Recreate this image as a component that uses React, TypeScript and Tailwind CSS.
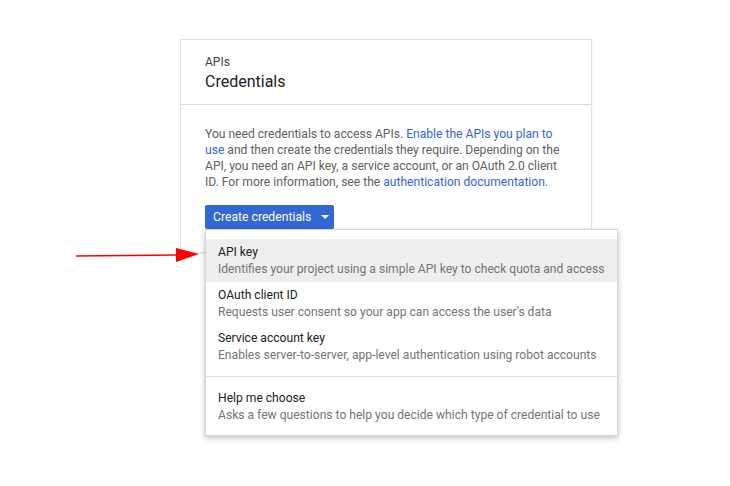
import React from 'react';

const menuItems = [
  { title: 'API key', desc: 'Identifies your project using a simple API key to check quota and access', active: true },
  { title: 'OAuth client ID', desc: "Requests user consent so your app can access the user's data" },
  { title: 'Service account key', desc: 'Enables server-to-server, app-level authentication using robot accounts' },
];

const MenuItem: React.FC<{ title: string; desc: string; active?: boolean }> = ({ title, desc, active }) => (
  <div className={`pl-[12px] pr-3 pt-[5px] pb-[5px] ${active ? 'bg-[#eeeeee]' : ''}`}>
    <div className="text-[12.1px] leading-[17px] text-[#212121]">{title}</div>
    <div className="text-[12.1px] leading-[16px] text-[#757575] whitespace-nowrap">{desc}</div>
  </div>
);

export default function App() {
  return (
    <div className="relative w-[730px] h-[486px] bg-white font-['Roboto',sans-serif]">
      <div className="relative ml-[180px] pt-[39px] w-[412px]">
        {/* Card */}
        <div className="border border-[#e0e0e0] bg-white shadow-[0_1px_2px_rgba(0,0,0,0.06)]">
          <div className="px-[24px] pt-[14px] pb-[10px] border-b border-[#dadada]">
            <div className="text-[12px] leading-[16px] text-[#424242]">APIs</div>
            <div className="text-[16px] leading-[24px] text-[#212121]">Credentials</div>
          </div>
          <div className="px-[24px] pt-[21px] pb-[23px]">
            <p className="text-[12.1px] leading-[16px] text-[#616161]">
              You need credentials to access APIs.{' '}
              <span className="text-[#3367d6]">Enable the APIs you plan to use</span> and then create the
              credentials they require. Depending on the API, you need an API key, a service account, or an
              OAuth 2.0 client ID. For more information, see the{' '}
              <span className="text-[#3367d6]">authentication documentation</span>.
            </p>
            <button className="mt-[15px] h-[24px] w-[129px] flex items-center pl-[8px] rounded-[2px] bg-[#3367d6] text-white text-[12.2px] leading-[16px]">
              Create credentials
              <svg width="8" height="4" viewBox="0 0 8 4" className="ml-[10px]">
                <path d="M0 0 L8 0 L4 4 Z" fill="#ffffff" />
              </svg>
            </button>
          </div>
        </div>

        {/* Dropdown menu */}
        <div className="absolute left-[25px] top-[229px] w-[413px] bg-white border border-[#d6d6d6] shadow-[0_2px_6px_rgba(0,0,0,0.25)] pt-[9px] pb-[7px]">
          {menuItems.map((m) => (
            <MenuItem key={m.title} {...m} />
          ))}
          <div className="mt-[8px] mb-[8px] border-t border-[#e0e0e0]" />
          <MenuItem title="Help me choose" desc="Asks a few questions to help you decide which type of credential to use" />
        </div>
      </div>

      {/* Annotation arrow */}
      <svg className="absolute left-[70px] top-[240px]" width="140" height="30" viewBox="0 0 140 30">
        <line x1="6" y1="16" x2="108" y2="15" stroke="#ff0000" strokeWidth="1.6" />
        <polygon points="106,8 129,14 106,22" fill="#ff0000" />
      </svg>
    </div>
  );
}
